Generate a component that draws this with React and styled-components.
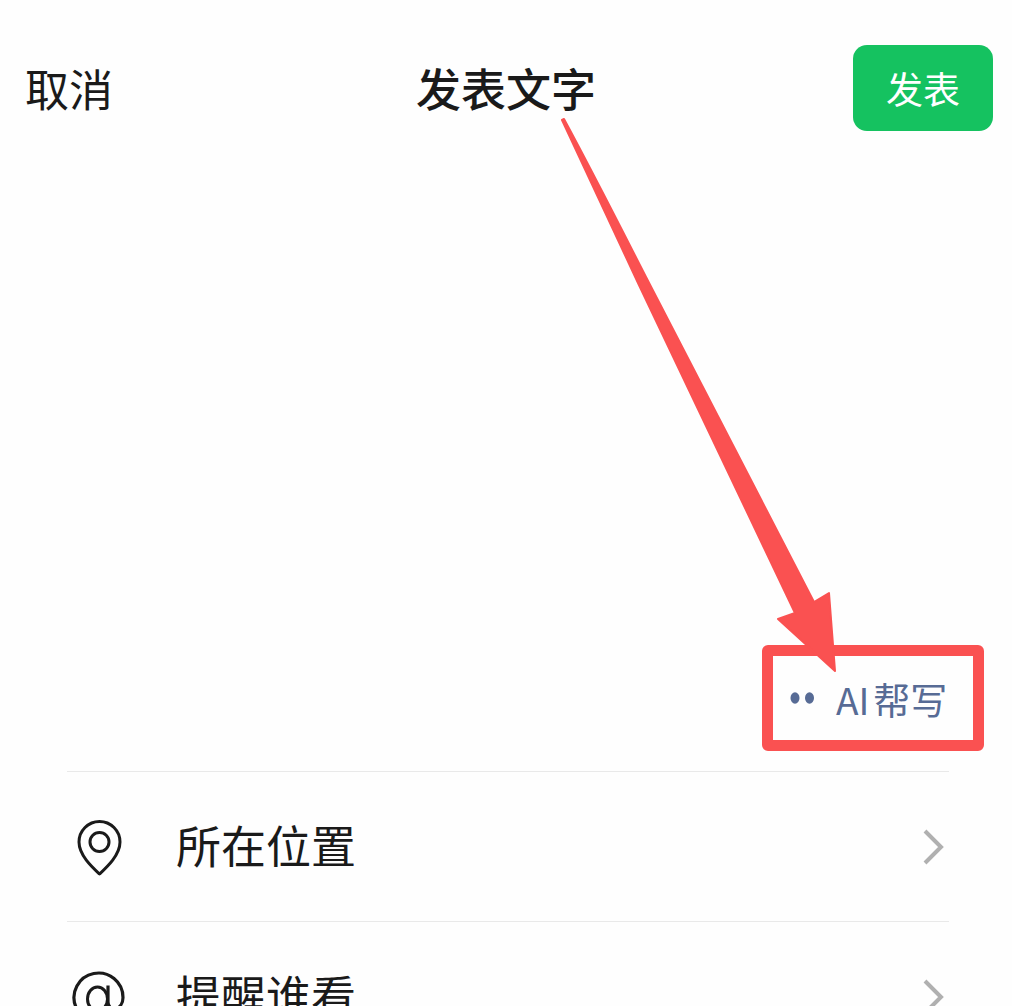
// external
import styled, {createGlobalStyle} from "styled-components";
import {useState} from "react";

// conf
const FONT = '"Noto Sans CJK SC", "Noto Sans", sans-serif';
const BACKGROUND = "#fefefe";
const TEXT = "#1a1a1a";
const GREEN = "#15c260";
const LINK = "#576b95";
const MARK = "#fa5151";
const LINE = "#e9e9e9";
const CHEVRON = "#b0b0b0";

const GlobalStyle = createGlobalStyle`
  * {
    box-sizing: border-box;
  }
  body {
    margin: 0;
    background-color: ${BACKGROUND};
    color: ${TEXT};
    font-family: ${FONT};
  }
  button, textarea {
    font-family: inherit;
    color: inherit;
  }
  button {
    border: none;
    background: none;
    padding: 0;
    cursor: pointer;
  }
`;

const Page = styled.main`
  display: flex;
  flex-direction: column;
`;

const Header = styled.header`
  display: grid;
  grid-template-columns: 1fr auto 1fr;
  align-items: center;
  padding: 45px 19px 0;
`;

const CancelButton = styled.button`
  justify-self: start;
  padding-left: 6px;
  font-size: 44px;
  line-height: 64px;
`;

const Title = styled.h1`
  margin: 0;
  font-size: 45px;
  font-weight: 500;
  line-height: 64px;
`;

const PublishButton = styled.button`
  justify-self: end;
  width: 140px;
  height: 86px;
  border-radius: 14px;
  background-color: ${GREEN};
  color: white;
  font-size: 37px;
`;

const Composer = styled.section`
  position: relative;
  display: flex;
  flex-direction: column;
  padding: 0 28px 20px 67px;
`;

const Editor = styled.textarea`
  height: 514px;
  padding: 24px 0;
  border: none;
  outline: none;
  resize: none;
  background: none;
  font-size: 45px;
`;

const AiButton = styled.button`
  align-self: flex-end;
  display: flex;
  align-items: center;
  gap: 20px;
  width: 222px;
  height: 106px;
  padding: 0 0 0 17px;
  border: 11px solid ${MARK};
  border-radius: 6px;
  color: ${LINK};
  font-size: 37px;
`;

const AiLabel = styled.span`
  display: flex;
  gap: 4px;
  padding-top: 2px;
`;

const Arrow = styled.svg`
  position: absolute;
  top: -14px;
  right: 172px;
  pointer-events: none;
`;

const OptionList = styled.ul`
  list-style: none;
  margin: 0;
  padding: 0 63px 0 67px;
`;

const OptionItem = styled.li`
  border-top: 1px solid ${LINE};
`;

const OptionButton = styled.button`
  display: flex;
  align-items: center;
  gap: 45px;
  width: 100%;
  height: 149px;
  padding: 0 4px;
  font-size: 45px;
  text-align: left;
`;

const OptionLabel = styled.span`
  flex: 1;
  padding-bottom: 4px;
`;

const DotsIcon = () => (
  <svg width="26" height="14" viewBox="0 0 26 14" fill={LINK} aria-hidden="true">
    <ellipse cx="5" cy="7" rx="4.5" ry="5.8"/>
    <ellipse cx="19.5" cy="7" rx="4.5" ry="5.8"/>
  </svg>
);

const PinIcon = () => (
  <svg width="60" height="60" viewBox="0 0 60 60" fill="none" stroke={TEXT} strokeWidth="3" strokeLinejoin="round" aria-hidden="true">
    <path d="M28.5 57 C21 50 8 38 8 25 A20.5 20.5 0 0 1 49 25 C49 38 36 50 28.5 57 Z"/>
    <circle cx="28.5" cy="25" r="9.5"/>
  </svg>
);

const MentionIcon = () => (
  <svg width="60" height="60" viewBox="0 0 60 60" fill="none" stroke={TEXT} strokeWidth="3" aria-hidden="true">
    <ellipse cx="26.5" cy="32" rx="10" ry="12"/>
    <path d="M37 18.5 V35 C37 45 52 44 52 30.5 A24.5 24.5 0 1 0 41 51" strokeWidth="3.2"/>
  </svg>
);

const ChevronIcon = () => (
  <svg width="24" height="40" viewBox="0 0 24 40" fill="none" stroke={CHEVRON} strokeWidth="4" aria-hidden="true">
    <path d="M4 4 L20 20 L4 36"/>
  </svg>
);

const options = [
  {name: "所在位置", Icon: PinIcon},
  {name: "提醒谁看", Icon: MentionIcon},
];

const App = () => {
  const [text, setText] = useState("");

  return (
    <>
      <GlobalStyle/>
      <Page>
        <Header>
          <CancelButton type="button">取消</CancelButton>
          <Title>发表文字</Title>
          <PublishButton type="button">发表</PublishButton>
        </Header>
        <Composer>
          <Editor aria-label="发表文字" value={text} onChange={(e) => setText(e.target.value)}/>
          <AiButton type="button">
            <DotsIcon/>
            <AiLabel>
              <span>AI</span>
              <span>帮写</span>
            </AiLabel>
          </AiButton>
          <Arrow width="280" height="560" viewBox="0 0 280 560" fill={MARK} aria-hidden="true">
            <path d="M2 3 L4 2 Q30 50 86 160 L254 485 L269 476 L275 554 L218 502 L235 496 L78 166 Q28 58 2 3 Z" stroke={MARK} strokeWidth="2" strokeLinejoin="round"/>
          </Arrow>
        </Composer>
        <OptionList>
          {options.map(({name, Icon}) => (
            <OptionItem key={name}>
              <OptionButton type="button">
                <Icon/>
                <OptionLabel>{name}</OptionLabel>
                <ChevronIcon/>
              </OptionButton>
            </OptionItem>
          ))}
        </OptionList>
      </Page>
    </>
  );
};

export default App;
